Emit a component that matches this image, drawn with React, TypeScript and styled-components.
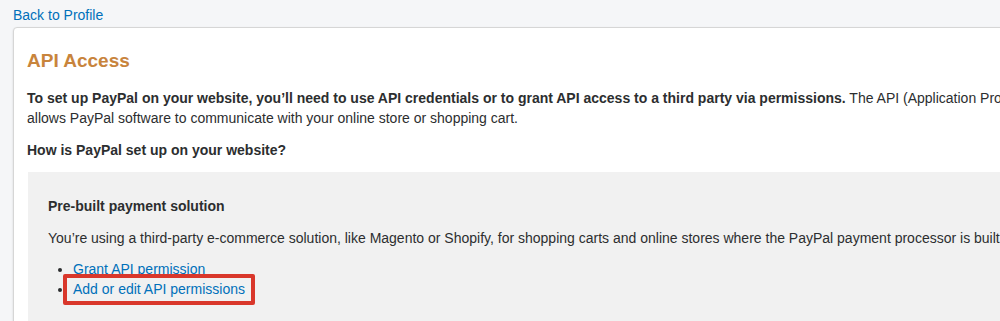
import React from "react";
import styled, { createGlobalStyle } from "styled-components";

const GlobalStyle = createGlobalStyle`
  html, body {
    margin: 0;
    padding: 0;
    background: #f5f6f8;
    overflow: hidden;
  }
  body {
    font-family: "Liberation Sans", Arial, sans-serif;
    font-size: 14px;
    color: #2c2e2f;
  }
`;

const Page = styled.div`
  width: 1100px;
  padding: 6px 0 0 13px;
  box-sizing: border-box;
`;

const BackLink = styled.a`
  display: block;
  color: #0070ba;
  text-decoration: none;
  font-size: 14px;
  line-height: 18px;
  margin-bottom: 3px;
`;

const Card = styled.section`
  background: #fff;
  border: 1px solid #d6d6d6;
  border-radius: 4px;
  box-shadow: 0 1px 2px rgba(0, 0, 0, 0.15);
  padding: 21px 14px 20px 13px;
  min-height: 400px;
`;

const Title = styled.h1`
  margin: 0 0 15px 0;
  font-size: 19px;
  line-height: 24px;
  font-weight: bold;
  color: #c8843c;
`;

const Text = styled.p<{ $strong?: boolean }>`
  margin: 0 0 12px 0;
  font-size: 14px;
  line-height: 20px;
  font-weight: ${(p) => (p.$strong ? "bold" : "normal")};
  white-space: nowrap;
`;

const Panel = styled.div`
  background: #f1f1f1;
  margin: 0 0 0 1px;
  padding: 24px 20px 20px 20px;
  min-height: 200px;
`;

const LinkList = styled.ul`
  margin: -1px 0 0 0;
  padding: 0 0 0 25px;
  list-style: disc;
  font-size: 14px;
  line-height: 20px;
`;

const Item = styled.li<{ $highlight?: boolean }>`
  position: relative;
  &::after {
    content: "";
    display: ${(p) => (p.$highlight ? "block" : "none")};
    position: absolute;
    left: -10px;
    top: -5px;
    width: 192px;
    height: 31px;
    border: 4px solid #d9372b;
    border-radius: 2px;
    box-sizing: border-box;
    pointer-events: none;
  }
`;

const ListLink = styled.a`
  color: #0070ba;
  text-decoration: none;
`;

export default function App() {
  return (
    <>
      <GlobalStyle />
      <Page>
        <BackLink href="#">Back to Profile</BackLink>
        <Card>
          <Title>API Access</Title>
          <Text>
            <b>
              To set up PayPal on your website, you’ll need to use API credentials or to grant API
              access to a third party via permissions.
            </b>{" "}
            The API (Application Programming Interface)
            <br />
            allows PayPal software to communicate with your online store or shopping cart.
          </Text>
          <Text $strong>How is PayPal set up on your website?</Text>
          <Panel>
            <Text $strong>Pre-built payment solution</Text>
            <Text>
              You’re using a third-party e-commerce solution, like Magento or Shopify, for shopping
              carts and online stores where the PayPal payment processor is built in.
            </Text>
            <LinkList>
              <Item>
                <ListLink href="#">Grant API permission</ListLink>
              </Item>
              <Item $highlight>
                <ListLink href="#">Add or edit API permissions</ListLink>
              </Item>
            </LinkList>
          </Panel>
        </Card>
      </Page>
    </>
  );
}
